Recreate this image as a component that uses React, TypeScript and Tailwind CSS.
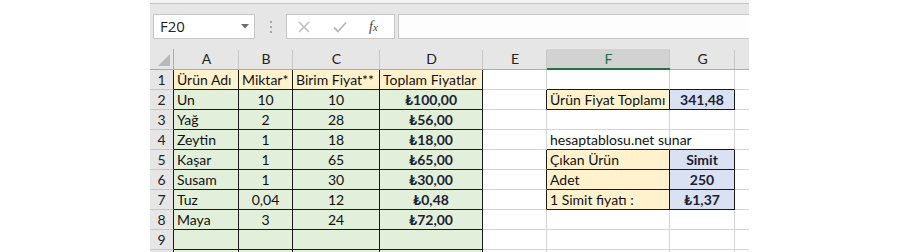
import React from "react";

type Fill = "y" | "g" | "b" | undefined;
type Cell = { t?: string; bold?: boolean; center?: boolean; fill?: Fill };

const COLW = [65, 54, 87, 103, 64, 123, 65, 60];
const COLN = ["A", "B", "C", "D", "E", "F", "G", ""];

const data: Record<number, Cell[]> = {
  1: [
    { t: "Ürün Adı", fill: "y" },
    { t: "Miktar*", fill: "y" },
    { t: "Birim Fiyat**", fill: "y" },
    { t: "Toplam Fiyatlar", fill: "y" },
  ],
  2: [
    { t: "Un", fill: "g" },
    { t: "10", center: true, fill: "g" },
    { t: "10", center: true, fill: "g" },
    { t: "₺100,00", bold: true, center: true, fill: "g" },
    {},
    { t: "Ürün Fiyat Toplamı", fill: "y" },
    { t: "341,48", bold: true, center: true, fill: "b" },
  ],
  3: [
    { t: "Yağ", fill: "g" },
    { t: "2", center: true, fill: "g" },
    { t: "28", center: true, fill: "g" },
    { t: "₺56,00", bold: true, center: true, fill: "g" },
  ],
  4: [
    { t: "Zeytin", fill: "g" },
    { t: "1", center: true, fill: "g" },
    { t: "18", center: true, fill: "g" },
    { t: "₺18,00", bold: true, center: true, fill: "g" },
    {},
    { t: "hesaptablosu.net sunar" },
  ],
  5: [
    { t: "Kaşar", fill: "g" },
    { t: "1", center: true, fill: "g" },
    { t: "65", center: true, fill: "g" },
    { t: "₺65,00", bold: true, center: true, fill: "g" },
    {},
    { t: "Çıkan Ürün", fill: "y" },
    { t: "Simit", bold: true, center: true, fill: "b" },
  ],
  6: [
    { t: "Susam", fill: "g" },
    { t: "1", center: true, fill: "g" },
    { t: "30", center: true, fill: "g" },
    { t: "₺30,00", bold: true, center: true, fill: "g" },
    {},
    { t: "Adet", fill: "y" },
    { t: "250", bold: true, center: true, fill: "b" },
  ],
  7: [
    { t: "Tuz", fill: "g" },
    { t: "0,04", center: true, fill: "g" },
    { t: "12", center: true, fill: "g" },
    { t: "₺0,48", bold: true, center: true, fill: "g" },
    {},
    { t: "1 Simit fiyatı :", fill: "y" },
    { t: "₺1,37", bold: true, center: true, fill: "b" },
  ],
  8: [
    { t: "Maya", fill: "g" },
    { t: "3", center: true, fill: "g" },
    { t: "24", center: true, fill: "g" },
    { t: "₺72,00", bold: true, center: true, fill: "g" },
  ],
  9: [{ fill: "g" }, { fill: "g" }, { fill: "g" }, { fill: "g" }],
  10: [{ fill: "g" }, { fill: "g" }, { fill: "g" }, { fill: "g" }],
};

function inBox(r: number, c: number) {
  if (c >= 0 && c <= 3 && r >= 1 && r <= 10) return true;
  if (r === 2 && (c === 5 || c === 6)) return true;
  if (r >= 5 && r <= 7 && (c === 5 || c === 6)) return true;
  return false;
}

const FONT = { fontFamily: "Lato, 'Noto Sans', 'DejaVu Sans', sans-serif" };

function GridCell({ r, c }: { r: number; c: number }) {
  const cell: Cell = (data[r] && data[r][c]) || {};
  const rb = inBox(r, c) || inBox(r, c + 1);
  const bb = inBox(r, c) || inBox(r + 1, c);
  const fillCls =
    cell.fill === "y"
      ? "bg-[#fff2cc]"
      : cell.fill === "g"
      ? "bg-[#e2efda]"
      : cell.fill === "b"
      ? "bg-[#d9e1f2]"
      : "bg-white";
  const overflow = r === 4 && c === 5;
  return (
    <div
      className={`relative h-[20px] shrink-0 border-r border-b flex items-center ${fillCls} ${
        rb ? "border-r-[#1a1a1a]" : "border-r-[#d4d4d4]"
      } ${bb ? "border-b-[#1a1a1a]" : "border-b-[#d4d4d4]"} ${
        cell.center ? "justify-center" : "justify-start pl-[3px]"
      } ${overflow ? "overflow-visible z-10" : "overflow-hidden"}`}
      style={{ width: COLW[c] }}
    >
      {cell.t && (
        <span
          className={`whitespace-nowrap text-[14px] leading-none ${
            cell.bold ? "font-bold text-[#1c2233]" : "text-[#111]"
          }`}
          style={FONT}
        >
          {cell.t}
        </span>
      )}
    </div>
  );
}

export default function App() {
  const rows = [1, 2, 3, 4, 5, 6, 7, 8, 9, 10];
  return (
    <div className="w-[900px] h-[252px] bg-white flex overflow-hidden">
      <div className="ml-[150px] w-[599px] h-[252px] bg-[#e6e6e6] overflow-hidden flex flex-col">
        {/* ribbon bottom */}
        <div className="h-[4px] shrink-0 bg-[#f3f3f3] border-b border-[#c6c6c6]" />
        {/* formula bar */}
        <div className="h-[45px] shrink-0 flex items-start pt-[10px]">
          <div className="ml-[3px] w-[102px] h-[25px] bg-white border border-[#c6c6c6] flex items-center justify-between pl-[6px] pr-[5px]">
            <span className="text-[15px] text-[#222]" style={{ fontFamily: "'Open Sans', 'Liberation Sans', sans-serif" }}>
              F20
            </span>
            <svg width="8" height="5" viewBox="0 0 8 5">
              <path d="M0 0 H8 L4 4.5 Z" fill="#6e6e6e" />
            </svg>
          </div>
          <div className="w-[31px] h-[25px] flex flex-col items-center justify-center gap-[3px]">
            <div className="w-[2px] h-[2px] bg-[#a8a8a8]" />
            <div className="w-[2px] h-[2px] bg-[#a8a8a8]" />
            <div className="w-[2px] h-[2px] bg-[#a8a8a8]" />
          </div>
          <div className="w-[109px] h-[25px] bg-white border border-[#c6c6c6] flex items-center">
            <svg width="12" height="12" viewBox="0 0 12 12" className="ml-[11px]">
              <path d="M1 1 L11 11 M11 1 L1 11" stroke="#b8b8b8" strokeWidth="1.4" />
            </svg>
            <svg width="14" height="12" viewBox="0 0 14 12" className="ml-[23px]">
              <path d="M1 6.5 L5 10.5 L13 1.5" stroke="#b8b8b8" strokeWidth="1.8" fill="none" />
            </svg>
            <span
              className="ml-[22px] text-[14px] italic text-[#444] leading-none"
              style={{ fontFamily: "'Liberation Serif', serif" }}
            >
              f<span className="text-[11px]">x</span>
            </span>
          </div>
          <div className="ml-[3px] flex-1 h-[25px] bg-[#fdfdfd] border-y border-l border-[#c6c6c6]" />
        </div>
        {/* column headers */}
        <div className="flex h-[21px] shrink-0">
          <div className="w-[24px] h-[21px] shrink-0 border-r border-b border-[#ababab] flex items-end justify-end pr-[3px] pb-[3px]">
            <svg width="12" height="12" viewBox="0 0 12 12">
              <path d="M12 0 V12 H0 Z" fill="#b9b9b9" />
            </svg>
          </div>
          {COLN.map((n, i) => {
            const sel = i === 5;
            return (
              <div
                key={i}
                className={`h-[21px] shrink-0 flex items-center justify-center relative ${
                  sel ? "bg-[#d2d2d2] border-b-2 border-[#217346]" : "border-b border-[#ababab]"
                }`}
                style={{ width: COLW[i] }}
              >
                {n && (
                  <span
                    className={`text-[14px] leading-none ${sel ? "text-[#217346]" : "text-[#222]"}`}
                    style={FONT}
                  >
                    {n}
                  </span>
                )}
                <div className="absolute right-0 top-[1px] bottom-0 w-px bg-[#c6c6c6]" />
              </div>
            );
          })}
        </div>
        {/* rows */}
        {rows.map((r) => (
          <div key={r} className="flex h-[20px] shrink-0">
            <div
              className={`w-[24px] h-[20px] shrink-0 border-r border-b border-b-[#c6c6c6] flex items-center justify-center ${
                inBox(r, 0) ? "border-r-[#1a1a1a]" : "border-r-[#ababab]"
              }`}
            >
              {r < 10 && (
                <span className="text-[14px] leading-none text-[#222]" style={FONT}>
                  {r}
                </span>
              )}
            </div>
            {COLN.map((_, c) => (
              <GridCell key={c} r={r} c={c} />
            ))}
          </div>
        ))}
      </div>
    </div>
  );
}
